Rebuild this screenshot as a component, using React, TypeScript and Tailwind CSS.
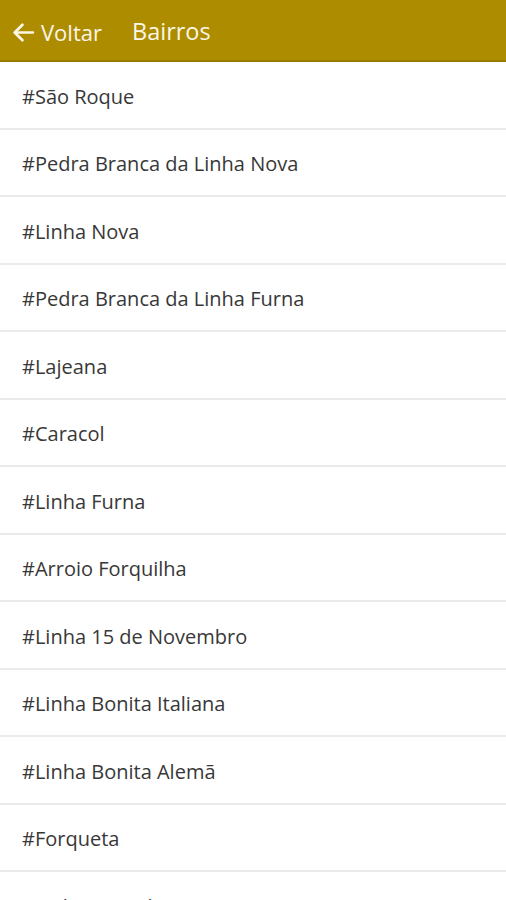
import React from 'react';

const bairros = [
  'São Roque',
  'Pedra Branca da Linha Nova',
  'Linha Nova',
  'Pedra Branca da Linha Furna',
  'Lajeana',
  'Caracol',
  'Linha Furna',
  'Arroio Forquilha',
  'Linha 15 de Novembro',
  'Linha Bonita Italiana',
  'Linha Bonita Alemã',
  'Forqueta',
  'Linha Lajeado Leão',
];

const BackArrow = () => (
  <svg width="25" height="25" viewBox="0 0 24 24" fill="none" stroke="currentColor" strokeWidth="2.6" strokeLinecap="round" strokeLinejoin="round">
    <path d="M21 12H4" />
    <path d="M11 4.5L3.5 12L11 19.5" />
  </svg>
);

const App: React.FC = () => {
  return (
    <div className="w-[506px] h-[900px] overflow-hidden bg-white font-['Open_Sans',sans-serif]">
      <header className="h-[62px] bg-[#ad8c00] border-b-2 border-[#9a7d00] flex items-center pt-[4px] text-[#fbf6e6]">
        <button className="flex items-center pl-[11px] gap-[5px]">
          <BackArrow />
          <span className="text-[22px] leading-none">Voltar</span>
        </button>
        <h1 className="ml-[30px] text-[23.5px] leading-none">Bairros</h1>
      </header>

      <ul>
        {bairros.map((b) => (
          <li
            key={b}
            className="h-[67.5px] border-b-2 border-[#ebebeb] flex items-center pl-[22px] pt-[4px] text-[20px] text-[#383838]"
          >
            #{b}
          </li>
        ))}
      </ul>
    </div>
  );
};

export default App;
